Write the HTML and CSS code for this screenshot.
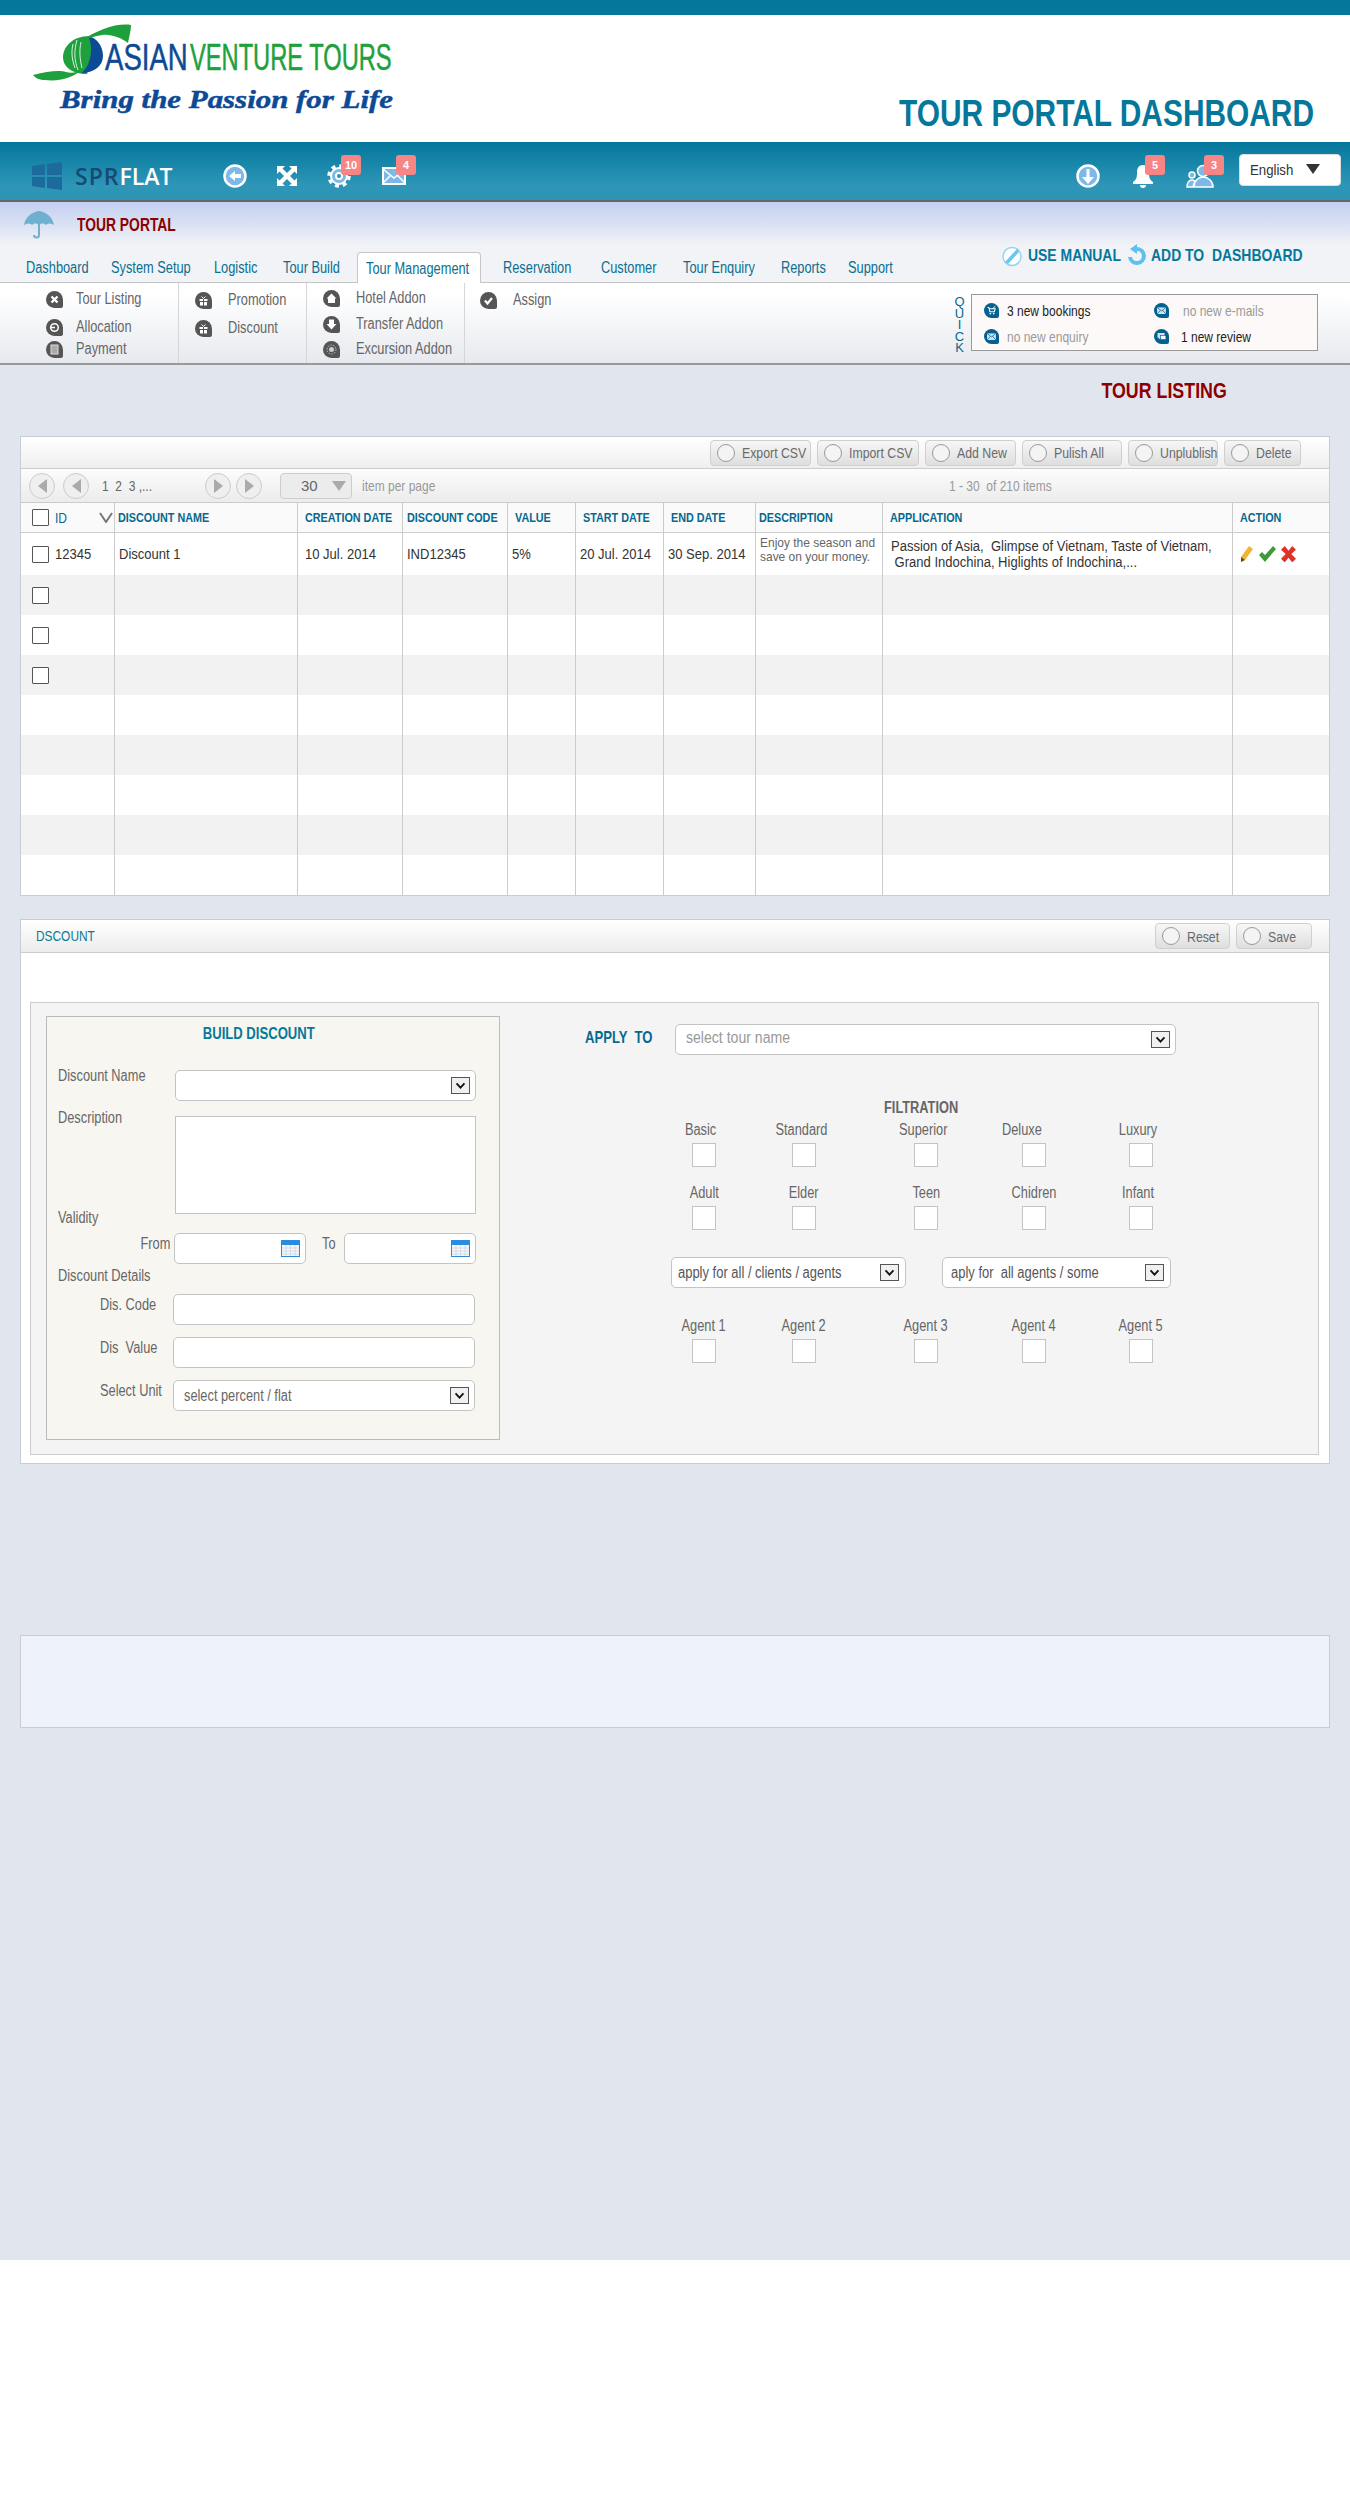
FILE: index.html
```html
<!DOCTYPE html>
<html lang="en">
<head>
    <title>Tour Portal Dashboard</title>
    <meta charset="utf-8">
    <link rel="stylesheet" href="styles.css">
</head>
<body>

<svg class="sprites" xmlns="http://www.w3.org/2000/svg">
    <symbol id="i-chev" viewBox="0 0 19 17"><path d="M5 6l4.500 5L14 6" fill="none" stroke="#111" stroke-width="2"/></symbol>
    <symbol id="i-cal" viewBox="0 0 19 17"><rect x=".5" y=".5" width="18" height="16" fill="#f4f6f8" stroke="#2b8be0"/><rect width="19" height="5" fill="#2b8be0"/><path d="M1 8h17M1 11h17M1 14h17M5 5v11M9.500 5v11M14 5v11" stroke="#cfd6dc" stroke-width=".8"/></symbol>
    <symbol id="i-x" viewBox="0 0 17 17"><path d="M5.500 5.500l6 6m0-6l-6 6" stroke="#fff" stroke-width="2.400"/></symbol>
    <symbol id="i-cycle" viewBox="0 0 17 17"><circle cx="8.500" cy="8.500" r="3.800" fill="none" stroke="#fff" stroke-width="1.500"/><path d="M4 8.500h5" stroke="#fff" stroke-width="1.500"/></symbol>
    <symbol id="i-doc" viewBox="0 0 17 17"><rect x="5" y="4" width="7" height="9" fill="#aaa" stroke="#ddd"/></symbol>
    <symbol id="i-gift" viewBox="0 0 17 17"><path d="M4.500 7h8v2h-8zM5 10h7v3.500H5z" fill="#fff"/><path d="M6.500 4.500l2 2 2-2" stroke="#fff" fill="none"/><path d="M8.500 7v7" stroke="#555"/></symbol>
    <symbol id="i-home" viewBox="0 0 17 17"><path d="M8.500 3.500l5 5h-1.500v4.500H5V8.500H3.500z" fill="#fff"/></symbol>
    <symbol id="i-down" viewBox="0 0 17 17"><path d="M6 3.500h5V8h2.500l-5 5.500-5-5.500H6z" fill="#fff"/></symbol>
    <symbol id="i-sun" viewBox="0 0 17 17"><circle cx="8.500" cy="8.500" r="2.500" fill="#ccc"/><circle cx="8.500" cy="8.500" r="4.500" fill="none" stroke="#ccc" stroke-dasharray="1.400 1.400"/></symbol>
    <symbol id="i-check" viewBox="0 0 17 17"><path d="M5 8.500l2.500 3L12 6" fill="none" stroke="#fff" stroke-width="2.200"/></symbol>
    <symbol id="i-cart" viewBox="0 0 17 17"><path d="M4 5h1.500l1.200 5h5l1-3.500H6" fill="none" stroke="#fff" stroke-width="1.200"/><path d="M9.500 6.500L13 3.500" stroke="#fff"/><circle cx="7.200" cy="12" r="1" fill="#fff"/><circle cx="11" cy="12" r="1" fill="#fff"/></symbol>
    <symbol id="i-mail" viewBox="0 0 17 17"><rect x="3.500" y="5" width="10" height="7.500" fill="#cfe3f2"/><path d="M3.500 5l5 4 5-4M3.500 12.500l4-4.500m6 4.500l-4-4.500" fill="none" stroke="#04608f" stroke-width=".8"/></symbol>
    <symbol id="i-chat" viewBox="0 0 17 17"><path d="M4 4.500h8v5.500H7.500L5.500 12v-2H4z" fill="#cfe3f2"/><rect x="7.500" y="7.500" width="6" height="4.500" fill="#fff" stroke="#04608f" stroke-width=".7"/></symbol>
    <symbol id="i-radio" viewBox="0 0 24 24"><circle cx="12" cy="12" r="10.500" fill="#7cb9e8" stroke="#fff" stroke-width="2.500"/></symbol>
</svg>

<div class="topbar"></div>

<header class="brand">
    <svg class="logo" viewBox="0 0 560 100" width="560" height="100" xmlns="http://www.w3.org/2000/svg">
        <path d="M60 16C41 16 33 28 33 37c0 10 9 17 24 17 4-12 6-26 3-38z" fill="#1ea03c"/>
        <path d="M58 16c9 2 15 10 15 20 0 10-9 17-22 17 8-4 14-24 7-37z" fill="#0d4a96"/>
        <path d="M47 20c-3 10-3 20 1 30M43 24c-2 8-1 16 2 24M51 22c-2 9-1 18 1 26" stroke="#d8efdc" fill="none"/>
        <path d="M101 5C87 3 68 9 50 22c8-4 15-6 22-7 10-1 19 3 26 8 1-6 3-12 3-18z" fill="#1ea03c"/>
        <path d="M3 55c15-4 27-5 33-3 6 2 12 0 17-3-7 7-22 13-38 11-5 0-10-2-12-5z" fill="#1ea03c"/>
        <text class="logo-word" transform="translate(75 50) scale(.745 1)" fill="#0d4a96" stroke="#0d4a96">ASIAN</text>
        <text class="logo-word" transform="translate(160 50) scale(.64 1)" fill="#1ea03c" stroke="#1ea03c">VENTURE TOURS</text>
        <text class="logo-tag" x="30" y="88" textLength="333" lengthAdjust="spacingAndGlyphs" fill="#0d4a96" stroke="#0d4a96" stroke-width=".5">Bring the Passion for Life</text>
    </svg>
    <h1 class="portal-title"><span class="n">TOUR PORTAL DASHBOARD</span></h1>
</header>

<nav class="navbar">
    <svg class="win" viewBox="0 0 30 28" width="30" height="28"><path d="M0 4l13-2v11H0zM15 2l15-2v13H15zM0 15h13v11L0 24zM15 15h15v13l-15-2z" fill="#1d6a9c"/></svg>
    <div class="brand-name"><span class="spr">SPR</span>FLAT</div>
    <div class="nav-icons">
        <span class="nav-icon">
            <svg viewBox="0 0 24 24" width="24" height="24"><use href="#i-radio"/><path d="M6 12l6-5v3h6v4h-6v3z" fill="#fff"/></svg>
        </span>
        <span class="nav-icon">
            <svg viewBox="0 0 24 24" width="24" height="24"><path d="M2 2h8L7.500 4.500 12 9l4.500-4.500L14 2h8v8l-2.500-2.500L15 12l4.500 4.500L22 14v8h-8l2.500-2.500L12 15l-4.500 4.500L10 22H2v-8l2.500 2.500L9 12 4.500 7.500 2 10z" fill="#fff"/></svg>
        </span>
        <span class="nav-icon">
            <svg viewBox="0 0 24 24" width="24" height="24"><circle cx="12" cy="12" r="10" fill="none" stroke="#fff" stroke-width="3.500" stroke-dasharray="3.900 3.950"/><circle cx="12" cy="12" r="8" fill="#7cb9e8" stroke="#fff" stroke-width="2"/><circle cx="12" cy="12" r="3" fill="#2e8fb3" stroke="#fff" stroke-width="2"/></svg>
            <span class="badge">10</span>
        </span>
        <span class="nav-icon nav-mail">
            <svg viewBox="0 0 24 18" width="24" height="18"><rect x="1" y="1" width="22" height="16" fill="#7cb9e8" stroke="#fff" stroke-width="2"/><path d="M1 2l11 9 11-9M1 16l8-8m14 8l-8-8" fill="none" stroke="#fff" stroke-width="1.500"/></svg>
            <span class="badge">4</span>
        </span>
    </div>
    <div class="nav-right">
        <span class="nav-icon">
            <svg viewBox="0 0 24 24" width="24" height="24"><use href="#i-radio"/><path d="M10.500 5h3v8H18l-6 7-6-7h4.500z" fill="#fff"/></svg>
        </span>
        <span class="nav-icon">
            <svg viewBox="0 0 24 24" width="24" height="24"><path d="M12 1c5 0 6 4 6 8 0 5 1 7 4 9v2H2v-2c3-2 4-4 4-9 0-4 1-8 6-8z" fill="#fff"/><path d="M9 21h6a3 3 0 0 1-6 0z" fill="#fff"/></svg>
            <span class="badge">5</span>
        </span>
        <span class="nav-icon nav-users">
            <svg viewBox="0 0 28 24" width="28" height="24"><circle cx="6" cy="11" r="3" fill="#7cb9e8" stroke="#fff" stroke-width="1.500"/><path d="M1 23c0-4 2-7 5-7 1 0 2 .5 3 1l-2 6z" fill="#7cb9e8" stroke="#fff" stroke-width="1.500"/><circle cx="17" cy="7" r="5.500" fill="#7cb9e8" stroke="#fff" stroke-width="1.500"/><path d="M8 23c0-6 4-10 9-10s10 4 10 10z" fill="#7cb9e8" stroke="#fff" stroke-width="1.500"/></svg>
            <span class="badge">3</span>
        </span>
        <div class="lang"><span class="n">English</span><i class="lang-arrow"></i></div>
    </div>
</nav>

<section class="portal">
    <div class="portal-head">
        <svg class="umbrella" viewBox="0 0 30 29" width="30" height="29"><path d="M15 1C7 2 1 8 0 15c3-2 6-2 8 0 2-2 5-2 7 0 2-2 5-2 7 0 2-2 5-2 8 0-1-7-7-13-15-14z" fill="#6fb0d0"/><path d="M15 14v11a2.500 2.500 0 0 1-5 0" fill="none" stroke="#6fb0d0" stroke-width="2"/></svg>
        <div class="portal-name"><span class="n">TOUR PORTAL</span></div>
    </div>
    <div class="portal-bar">
        <ul class="tabs">
            <li><span class="n">Dashboard</span></li>
            <li><span class="n">System Setup</span></li>
            <li><span class="n">Logistic</span></li>
            <li><span class="n">Tour Build</span></li>
            <li class="active"><span class="n">Tour Management</span></li>
            <li><span class="n">Reservation</span></li>
            <li><span class="n">Customer</span></li>
            <li><span class="n">Tour Enquiry</span></li>
            <li><span class="n">Reports</span></li>
            <li><span class="n">Support</span></li>
        </ul>
        <div class="links">
            <svg viewBox="0 0 20 21" width="20" height="21"><circle cx="10" cy="10.500" r="9" fill="#fff" stroke="#8fd6f5" stroke-width="1.500"/><path d="M3 16L15 3l2 3L6 18z" fill="#6cc5ee"/></svg>
            <a class="link-manual"><span class="n">USE MANUAL</span></a>
            <svg viewBox="0 0 20 24" width="20" height="24"><path d="M10 3a9 9 0 1 1-9 10h4a5 5 0 1 0 5-6v3L3 5l7-5z" fill="#5fc0ee"/></svg>
            <a class="link-add"><span class="n">ADD TO &nbsp;DASHBOARD</span></a>
        </div>
    </div>
</section>

<section class="submenu">
    <div class="menu-col col-first">
        <div class="menu-item"><span class="bub"><svg><use href="#i-x"/></svg></span><span class="n">Tour Listing</span></div>
        <div class="menu-item"><span class="bub"><svg><use href="#i-cycle"/></svg></span><span class="n">Allocation</span></div>
        <div class="menu-item"><span class="bub"><svg><use href="#i-doc"/></svg></span><span class="n">Payment</span></div>
    </div>
    <div class="menu-col col-second">
        <div class="menu-item"><span class="bub"><svg><use href="#i-gift"/></svg></span><span class="n">Promotion</span></div>
        <div class="menu-item"><span class="bub"><svg><use href="#i-gift"/></svg></span><span class="n">Discount</span></div>
    </div>
    <div class="menu-col col-third">
        <div class="menu-item"><span class="bub"><svg><use href="#i-home"/></svg></span><span class="n">Hotel Addon</span></div>
        <div class="menu-item"><span class="bub"><svg><use href="#i-down"/></svg></span><span class="n">Transfer Addon</span></div>
        <div class="menu-item"><span class="bub"><svg><use href="#i-sun"/></svg></span><span class="n">Excursion Addon</span></div>
    </div>
    <div class="menu-col col-last">
        <div class="menu-item"><span class="bub"><svg><use href="#i-check"/></svg></span><span class="n">Assign</span></div>
    </div>
    <div class="quick">
        <div class="quick-label">QUICK</div>
        <div class="quick-box">
            <div class="quick-item"><span class="bub blue"><svg><use href="#i-cart"/></svg></span><span class="n">3 new bookings</span></div>
            <div class="quick-item off"><span class="bub blue"><svg><use href="#i-mail"/></svg></span><span class="n">no new e-mails</span></div>
            <div class="quick-item off"><span class="bub blue"><svg><use href="#i-mail"/></svg></span><span class="n">no new enquiry</span></div>
            <div class="quick-item"><span class="bub blue"><svg><use href="#i-chat"/></svg></span><span class="n">1 new review</span></div>
        </div>
    </div>
</section>

<main class="content">
    <h2 class="page-title"><span class="n">TOUR LISTING</span></h2>

    <section class="panel">
        <div class="toolbar">
            <a class="btn"><i></i><span class="n">Export CSV</span></a>
            <a class="btn"><i></i><span class="n">Import CSV</span></a>
            <a class="btn"><i></i><span class="n">Add New</span></a>
            <a class="btn"><i></i><span class="n">Pulish All</span></a>
            <a class="btn"><i></i><span class="n">Unplublish</span></a>
            <a class="btn"><i></i><span class="n">Delete</span></a>
        </div>
        <div class="pager">
            <a class="pg-btn"><i class="tri-l"></i></a>
            <a class="pg-btn"><i class="tri-l"></i></a>
            <span class="pg-nums"><span class="n">1&nbsp; 2&nbsp; 3 ,...</span></span>
            <a class="pg-btn"><i class="tri-r"></i></a>
            <a class="pg-btn"><i class="tri-r"></i></a>
            <span class="pg-size">30<i class="tri-d"></i></span>
            <span class="pg-text"><span class="n">item per page</span></span>
            <span class="pg-count"><span class="n">1 - 30 &nbsp;of 210 items</span></span>
        </div>
        <table class="grid">
            <colgroup>
                <col class="c-id"><col class="c-name"><col class="c-date"><col class="c-date"><col class="c-val">
                <col class="c-start"><col class="c-end"><col class="c-desc"><col class="c-app"><col class="c-act">
            </colgroup>
            <thead>
                <tr>
                    <th class="th-id"><div class="cell"><span class="check"></span><span class="id-text">ID</span><svg class="id-sort" viewBox="0 0 14 11" width="14" height="11"><path d="M1 1l6 9 6-9" fill="none" stroke="#777" stroke-width="2"/></svg></div></th>
                    <th class="th-name"><span class="n">DISCOUNT NAME</span></th>
                    <th><span class="n">CREATION DATE</span></th>
                    <th class="th-code"><span class="n">DISCOUNT CODE</span></th>
                    <th><span class="n">VALUE</span></th>
                    <th><span class="n">START DATE</span></th>
                    <th><span class="n">END DATE</span></th>
                    <th class="th-desc"><span class="n">DESCRIPTION</span></th>
                    <th><span class="n">APPLICATION</span></th>
                    <th><span class="n">ACTION</span></th>
                </tr>
            </thead>
            <tbody>
                <tr class="first">
                    <td><div class="cell"><span class="check"></span><span class="n">12345</span></div></td>
                    <td class="td-name"><span class="n">Discount 1</span></td>
                    <td><span class="n">10 Jul. 2014</span></td>
                    <td class="td-code"><span class="n">IND12345</span></td>
                    <td class="td-val"><span class="n">5%</span></td>
                    <td class="td-start"><span class="n">20 Jul. 2014</span></td>
                    <td class="td-end"><span class="n">30 Sep. 2014</span></td>
                    <td class="td-desc"><span class="n">Enjoy the season and</span><br><span class="n">save on your money.</span></td>
                    <td class="td-app"><span class="n">Passion of Asia, &nbsp;Glimpse of Vietnam, Taste of Vietnam,</span><br><span class="n">&nbsp;Grand Indochina, Higlights of Indochina,...</span></td>
                    <td class="td-act">
                        <svg viewBox="0 0 14 18" width="14" height="18"><path d="M9 1l4 3-8 11-4 2 0-5z" fill="#f2b632"/><path d="M1 12l4 3-4 2z" fill="#6b4a18"/></svg>
                        <svg viewBox="0 0 17 16" width="17" height="16"><path d="M0 9l3-3 3 3 8-9 3 3L6 16z" fill="#3f9a3a"/></svg>
                        <svg viewBox="0 0 16 17" width="15" height="16"><path d="M0 4l4-4 4 5 4-5 4 4-5 4.500 5 5-4 4-4-5-4 5-4-4 5-5z" fill="#e0312a"/></svg>
                    </td>
                </tr>
                <tr><td><div class="cell"><span class="check"></span></div></td><td></td><td></td><td></td><td></td><td></td><td></td><td></td><td></td><td></td></tr>
                <tr><td><div class="cell"><span class="check"></span></div></td><td></td><td></td><td></td><td></td><td></td><td></td><td></td><td></td><td></td></tr>
                <tr><td><div class="cell"><span class="check"></span></div></td><td></td><td></td><td></td><td></td><td></td><td></td><td></td><td></td><td></td></tr>
                <tr><td></td><td></td><td></td><td></td><td></td><td></td><td></td><td></td><td></td><td></td></tr>
                <tr><td></td><td></td><td></td><td></td><td></td><td></td><td></td><td></td><td></td><td></td></tr>
                <tr><td></td><td></td><td></td><td></td><td></td><td></td><td></td><td></td><td></td><td></td></tr>
                <tr><td></td><td></td><td></td><td></td><td></td><td></td><td></td><td></td><td></td><td></td></tr>
                <tr><td></td><td></td><td></td><td></td><td></td><td></td><td></td><td></td><td></td><td></td></tr>
            </tbody>
        </table>
    </section>

    <section class="panel panel-form">
        <div class="panel-head">
            <span class="panel-name"><span class="n">DSCOUNT</span></span>
            <a class="btn btn-reset"><i></i><span class="n">Reset</span></a>
            <a class="btn btn-save"><i></i><span class="n">Save</span></a>
        </div>
        <div class="form-area">
            <div class="build">
                <h3 class="build-title"><span class="n">BUILD DISCOUNT</span></h3>
                <div class="row row-name">
                    <label><span class="n">Discount Name</span></label>
                    <div class="ctl ctl-wide"><span class="arrow"><svg><use href="#i-chev"/></svg></span></div>
                </div>
                <div class="row row-desc">
                    <label><span class="n">Description</span></label>
                    <div class="ctl ctl-wide ctl-area"></div>
                </div>
                <div class="caption cap-validity"><span class="n">Validity</span></div>
                <div class="row row-dates">
                    <label class="lbl-from"><span class="n">From</span></label>
                    <div class="ctl ctl-date"><svg class="cal"><use href="#i-cal"/></svg></div>
                    <label class="lbl-to"><span class="n">To</span></label>
                    <div class="ctl ctl-date"><svg class="cal"><use href="#i-cal"/></svg></div>
                </div>
                <div class="caption cap-details"><span class="n">Discount Details</span></div>
                <div class="row row-sub">
                    <label><span class="n">Dis. Code</span></label>
                    <div class="ctl ctl-sub"></div>
                </div>
                <div class="row row-sub">
                    <label><span class="n">Dis &nbsp;Value</span></label>
                    <div class="ctl ctl-sub"></div>
                </div>
                <div class="row row-sub">
                    <label><span class="n">Select Unit</span></label>
                    <div class="ctl ctl-sub"><span class="ctl-text"><span class="n">select percent / flat</span></span><span class="arrow"><svg><use href="#i-chev"/></svg></span></div>
                </div>
            </div>

            <div class="apply">
                <div class="apply-row">
                    <div class="apply-name"><span class="n">APPLY &nbsp;TO</span></div>
                    <div class="ctl ctl-tour"><span class="ctl-text muted"><span class="n">select tour name</span></span><span class="arrow"><svg><use href="#i-chev"/></svg></span></div>
                </div>
                <div class="filter-name"><span class="n">FILTRATION</span></div>
                <div class="opts">
                    <div class="opt opt-up"><span class="n">Basic</span><i></i></div>
                    <div class="opt opt-up"><span class="n">Standard</span><i></i></div>
                    <div class="opt opt-up"><span class="n">Superior</span><i></i></div>
                    <div class="opt opt-left"><span class="n">Deluxe</span><i></i></div>
                    <div class="opt opt-up"><span class="n">Luxury</span><i></i></div>
                    <div class="opt"><span class="n">Adult</span><i></i></div>
                    <div class="opt"><span class="n">Elder</span><i></i></div>
                    <div class="opt"><span class="n">Teen</span><i></i></div>
                    <div class="opt"><span class="n">Chidren</span><i></i></div>
                    <div class="opt opt-up"><span class="n">Infant</span><i></i></div>
                </div>
                <div class="apply-selects">
                    <div class="ctl ctl-clients"><span class="ctl-text"><span class="n">apply for all / clients / agents</span></span><span class="arrow"><svg><use href="#i-chev"/></svg></span></div>
                    <div class="ctl ctl-agents"><span class="ctl-text"><span class="n">aply for &nbsp;all agents / some</span></span><span class="arrow"><svg><use href="#i-chev"/></svg></span></div>
                </div>
                <div class="opts">
                    <div class="opt"><span class="n">Agent 1</span><i></i></div>
                    <div class="opt"><span class="n">Agent 2</span><i></i></div>
                    <div class="opt"><span class="n">Agent 3</span><i></i></div>
                    <div class="opt"><span class="n">Agent 4</span><i></i></div>
                    <div class="opt"><span class="n">Agent 5</span><i></i></div>
                </div>
            </div>
        </div>
    </section>

    <section class="lower-box"></section>
</main>

</body>
</html>
```

FILE: styles.css
```css
html, body {
    margin: 0;
    padding: 0;
    background: #fff;
}
body {
    font-family: "Liberation Sans", Arial, sans-serif;
    font-size: 16px;
    color: #666;
    height: 2500px;
    overflow: hidden;
}
h1, h2, h3, ul {
    margin: 0;
    padding: 0;
}
a {
    cursor: pointer;
}
.sprites {
    display: none;
}
/* the whole design is squeezed sideways, no narrow font is installed */
.n {
    display: inline-block;
    white-space: nowrap;
    transform: scaleX(var(--sx, .8));
    transform-origin: left center;
}

/* header */
.topbar {
    height: 15px;
    background: #04779b;
}
.brand {
    height: 127px;
    display: flex;
    justify-content: space-between;
}
.logo {
    margin: 5px 0 0 30px;
    flex: none;
}
.logo-word {
    font-size: 37px;
    stroke-width: .5;
}
.logo-tag {
    font-family: "Liberation Serif", serif;
    font-weight: bold;
    font-style: italic;
    font-size: 26px;
}
.portal-title {
    margin: 79px 36px 0 0;
    font-size: 36px;
    line-height: 40px;
    font-weight: bold;
    color: #04779b;
    --sx: .83;
}
.portal-title .n {
    transform-origin: right center;
}

/* dark nav */
.navbar {
    display: flex;
    align-items: center;
    padding-top: 10px;
    height: 48px;
    background: linear-gradient(#04779b, #2e96b8 75%, #2e93b5);
    border-bottom: 2px solid #666;
}
.win {
    margin-left: 32px;
    flex: none;
}
.brand-name {
    margin-left: 13px;
    width: 95px;
    font-family: "Open Sans", sans-serif;
    font-weight: 600;
    font-size: 23px;
    color: #fff;
}
.spr {
    color: #154a74;
    letter-spacing: 1px;
}
.nav-icons {
    margin-left: 53px;
    display: flex;
    gap: 28px;
}
.nav-icon {
    position: relative;
    display: flex;
    align-items: center;
    width: 24px;
    height: 24px;
}
.nav-mail {
    margin-left: 3px;
}
.nav-users {
    width: 28px;
}
.badge {
    position: absolute;
    top: -9px;
    right: -10px;
    width: 20px;
    height: 20px;
    border-radius: 3px;
    background: #f78585;
    color: #fff;
    font: bold 11px/20px "Liberation Sans", sans-serif;
    text-align: center;
}
.nav-right {
    margin-left: auto;
    display: flex;
    align-items: center;
    gap: 31px;
    margin-right: 9px;
}
.lang {
    width: 102px;
    height: 32px;
    box-sizing: border-box;
    margin: -12px 0 0 -6px;
    padding: 0 0 2px 10px;
    display: flex;
    align-items: center;
    background: #fff;
    border: 1px solid #ddd;
    border-radius: 4px;
    color: #333;
    font-size: 15px;
    --sx: .88;
}
.lang-arrow {
    margin-left: 7px;
    border-style: solid;
    border-width: 10px 7.500px 0;
    border-color: #333 transparent transparent;
}

/* portal strip */
.portal {
    height: 81px;
    box-sizing: border-box;
    display: flex;
    flex-direction: column;
    justify-content: space-between;
    background: linear-gradient(#c2cff0, #f1f3f6 55%);
    border-bottom: 1px solid #c6c6c6;
}
.portal-head {
    display: flex;
    padding: 8px 0 0 24px;
}
.portal-name {
    margin: 5px 0 0 23px;
    font-size: 18px;
    line-height: 20px;
    font-weight: bold;
    color: #8e0000;
    --sx: .77;
}
.portal-bar {
    position: relative;
    top: 1px;
    display: flex;
    align-items: flex-end;
    justify-content: space-between;
}
.tabs {
    list-style: none;
    display: grid;
    grid-template-columns: 85px 103px 69px 74px 146px 98px 82px 98px 67px 60px;
    padding-left: 26px;
    color: #0a6f8f;
}
.tabs li {
    height: 31px;
    line-height: 32px;
    white-space: nowrap;
}
.tabs .active {
    box-sizing: border-box;
    width: 124px;
    padding-left: 8px;
    background: #fff;
    border: 1px solid #c6c6c6;
    border-bottom: 0;
    border-radius: 4px 4px 0 0;
}
.links {
    display: flex;
    align-items: center;
    margin: 0 47px 15px 0;
    font-size: 17px;
    font-weight: bold;
    color: #04779b;
    --sx: .82;
}
.link-manual {
    width: 92px;
    margin: 0 7px 0 6px;
}
.link-add {
    width: 152px;
    margin-left: 4px;
}

/* sub menu */
.submenu {
    height: 82px;
    box-sizing: border-box;
    display: flex;
    background: linear-gradient(#fff 15%, #e6e9ee);
    border-bottom: 2px solid #999;
}
.menu-col {
    box-sizing: border-box;
    display: grid;
    padding-top: 2px;
    border-right: 1px solid #d4d6da;
}
.col-first {
    width: 179px;
    padding-left: 46px;
    grid-template-rows: 28px 28px 16px;
}
.col-second {
    width: 128px;
    padding-left: 16px;
    grid-template-rows: 30px 26px;
    align-content: start;
}
.col-third {
    width: 158px;
    padding-left: 16px;
    grid-template-rows: 26px 26px 24px;
}
.col-last {
    width: 200px;
    padding-left: 15px;
    grid-template-rows: 30px;
    border-right: 0;
}
.menu-item {
    display: flex;
    align-items: center;
    gap: 16px;
    white-space: nowrap;
}
.col-first .menu-item {
    gap: 13px;
}
.bub {
    flex: none;
    width: 17px;
    height: 17px;
    border-radius: 50% 50% 2px 50%;
    background: #555;
}
.bub svg {
    display: block;
    width: 17px;
    height: 17px;
}
.bub.blue {
    background: #04608f;
}
.quick {
    margin: 11px 32px 0 auto;
    display: flex;
    gap: 5px;
}
.quick-label {
    writing-mode: vertical-rl;
    text-orientation: upright;
    width: 14px;
    height: 58px;
    font-size: 13px;
    line-height: 14px;
    letter-spacing: -3.500px;
    color: #05698f;
}
.quick-box {
    box-sizing: border-box;
    width: 347px;
    height: 57px;
    padding: 2px 0 0 12px;
    display: grid;
    grid-template-columns: 170px 160px;
    grid-auto-rows: 26px;
    background: #fdf9f8;
    border: 1px solid #999;
}
.quick-item {
    display: flex;
    align-items: center;
    gap: 8px;
    font-size: 15px;
    color: #222;
}
.quick-item .bub,
.quick-item .bub svg {
    width: 15px;
    height: 15px;
}
.quick-item.off {
    color: #999;
}
.quick-item.off:nth-child(2) {
    gap: 14px;
}
.quick-item:nth-child(4) {
    gap: 12px;
}

/* page */
.content {
    height: 1895px;
    padding-left: 20px;
    background: #e1e6ee;
}
.page-title {
    height: 71px;
    box-sizing: border-box;
    padding: 14px 123px 0 0;
    text-align: right;
    font-size: 22px;
    line-height: 24px;
    font-weight: bold;
    color: #8e0000;
    --sx: .81;
}
.page-title .n {
    transform-origin: right center;
}
.panel {
    width: 1310px;
    box-sizing: border-box;
    background: #fff;
    border: 1px solid #c8cdd3;
}
.toolbar {
    height: 31px;
    padding-right: 28px;
    display: grid;
    grid-template-columns: 101px 102px 91px 100px 90px 77px;
    column-gap: 6px;
    justify-content: end;
    align-items: center;
    background: linear-gradient(#fff, #efefef);
    border-bottom: 1px solid #ccc;
}
.btn {
    box-sizing: border-box;
    height: 26px;
    padding-left: 6px;
    display: flex;
    align-items: center;
    font-size: 15px;
    color: #6a6a6a;
    background: linear-gradient(#f7f7f7, #dedede);
    border: 1px solid #cfcfcf;
    border-radius: 4px;
    --sx: .82;
}
.btn i {
    flex: none;
    width: 18px;
    height: 18px;
    margin-right: 7px;
    box-sizing: border-box;
    border: 1px solid #999;
    border-radius: 50%;
    background: #f4f4f4;
}
.pager {
    height: 33px;
    padding-left: 8px;
    display: flex;
    align-items: center;
    font-size: 15px;
    color: #999;
    background: linear-gradient(#fcfcfc, #ececec);
    border-bottom: 1px solid #ccc;
}
.pg-btn {
    box-sizing: border-box;
    flex: none;
    width: 26px;
    height: 26px;
    margin-right: 8px;
    display: flex;
    align-items: center;
    justify-content: center;
    border: 1px solid #ccc;
    border-radius: 50%;
    background: #efefef;
}
.tri-l, .tri-r, .tri-d {
    border-style: solid;
    border-color: transparent;
}
.tri-l {
    border-width: 7px 9px 7px 0;
    border-right-color: #aaa;
}
.tri-r {
    border-width: 7px 0 7px 9px;
    border-left-color: #aaa;
}
.tri-d {
    margin-left: 14px;
    border-width: 10px 7px 0;
    border-top-color: #aaa;
}
.pg-nums {
    width: 103px;
    margin-left: 5px;
    color: #666;
}
.pg-nums + .pg-btn {
    margin-right: 5px;
}
.pg-size {
    box-sizing: border-box;
    width: 72px;
    height: 26px;
    margin-left: 10px;
    padding-left: 20px;
    display: flex;
    align-items: center;
    color: #666;
    background: #ececec;
    border: 1px solid #ccc;
    border-radius: 4px;
}
.pg-text {
    width: 587px;
    margin-left: 10px;
}

/* grid */
.grid {
    width: 1308px;
    table-layout: fixed;
    border-collapse: separate;
    border-spacing: 0;
    font-size: 14px;
    color: #333;
    --sx: .93;
}
.c-id { width: 94px; }
.c-name { width: 183px; }
.c-date { width: 105px; }
.c-val { width: 68px; }
.c-start { width: 88px; }
.c-end { width: 92px; }
.c-desc { width: 127px; }
.c-app { width: 350px; }
.c-act { width: 96px; }
.grid th {
    height: 30px;
    box-sizing: border-box;
    padding: 0 0 0 7px;
    text-align: left;
    font-size: 12px;
    font-weight: bold;
    color: #05698f;
    background: #fafafa;
    border-right: 1px solid #ccc;
    border-bottom: 1px solid #ccc;
    --sx: .9;
}
.grid .th-name { padding-left: 3px; }
.grid .th-code { padding-left: 4px; }
.grid .th-desc { padding-left: 3px; }
.grid .th-id {
    padding-left: 11px;
    font-weight: normal;
    font-size: 15px;
}
.id-text {
    transform: scaleX(.8);
    transform-origin: left center;
}
.id-sort {
    margin-left: 29px;
}
.cell {
    display: flex;
    align-items: center;
}
.grid td {
    height: 40px;
    box-sizing: border-box;
    padding: 0 0 0 7px;
    border-right: 1px solid #ccc;
}
.grid td:last-child,
.grid th:last-child {
    border-right: 0;
}
.grid .first td {
    height: 42px;
}
.grid tbody tr:nth-child(even) td {
    background: #f2f2f2;
}
.grid td:first-child {
    padding-left: 11px;
}
.grid .td-name,
.grid .td-code,
.grid .td-val,
.grid .td-start,
.grid .td-end { padding-left: 4px; }
.grid .td-desc {
    padding: 3px 0 0 4px;
    vertical-align: top;
    font-size: 13px;
    line-height: 14px;
    color: #666;
    --sx: .92;
}
.grid .td-app {
    padding-left: 8px;
    line-height: 16px;
}
.td-act svg {
    margin-right: 1px;
    vertical-align: middle;
}
.check {
    flex: none;
    box-sizing: border-box;
    width: 17px;
    height: 17px;
    margin-right: 6px;
    background: #fff;
    border: 1px solid #555;
    border-radius: 1px;
}

/* discount form */
.panel-form {
    margin-top: 23px;
}
.panel-head {
    height: 32px;
    padding-right: 17px;
    display: flex;
    align-items: center;
    gap: 6px;
    background: linear-gradient(#fff, #ececec);
    border-bottom: 1px solid #ccc;
}
.panel-name {
    margin: 0 auto 0 15px;
    font-size: 14px;
    color: #0a7a95;
    --sx: .85;
}
.btn-reset { width: 75px; }
.btn-save { width: 76px; }
.form-area {
    box-sizing: border-box;
    margin: 49px 10px 8px 9px;
    height: 453px;
    padding: 13px 0 0 15px;
    display: flex;
    background: #f4f4f4;
    border: 1px solid #ccc;
}
.build {
    box-sizing: border-box;
    width: 454px;
    height: 424px;
    padding: 7px 0 0 11px;
    flex: none;
    background: #f7f6f1;
    border: 1px solid #bbb;
}
.build-title {
    padding-right: 40px;
    text-align: center;
    font-size: 17px;
    line-height: 20px;
    color: #05799a;
    --sx: .77;
}
.build-title .n {
    transform-origin: center;
}
.row {
    display: flex;
    align-items: flex-start;
}
.row label {
    line-height: 18px;
}
.row-name {
    margin-top: 26px;
}
.row-name label,
.row-desc label {
    width: 117px;
    margin-top: -3px;
}
.row-desc {
    margin-top: 15px;
}
.row-desc label {
    margin-top: -7px;
}
.caption {
    line-height: 18px;
}
.cap-validity {
    margin-top: -5px;
}
.row-dates {
    margin-top: 6px;
}
.lbl-from {
    width: 116px;
    margin-top: 2px;
    padding-right: 4px;
    box-sizing: border-box;
    text-align: right;
}
.lbl-from .n {
    transform-origin: right center;
}
.lbl-to {
    width: 38px;
    margin-top: 2px;
    padding-left: 16px;
    box-sizing: border-box;
}
.cap-details {
    margin-top: 3px;
}
.row-sub {
    margin-top: 12px;
    padding-left: 42px;
}
.cap-details + .row-sub {
    margin-top: 9px;
}
.row-sub label {
    width: 73px;
    margin-top: 2px;
    white-space: nowrap;
}
.ctl {
    box-sizing: border-box;
    height: 31px;
    padding: 0 5px 0 10px;
    display: flex;
    align-items: center;
    justify-content: space-between;
    background: #fff;
    border: 1px solid #c4c4c4;
    border-radius: 5px;
}
.ctl-wide {
    width: 301px;
    justify-content: flex-end;
}
.ctl-area {
    height: 98px;
    border-radius: 0;
}
.ctl-date {
    width: 132px;
    justify-content: flex-end;
}
.cal {
    width: 19px;
    height: 17px;
}
.ctl-sub {
    width: 302px;
}
.ctl-text {
    white-space: nowrap;
    color: #666;
}
.ctl-text.muted {
    margin-top: -3px;
    color: #999;
    --sx: .88;
}
.arrow {
    flex: none;
    box-sizing: border-box;
    width: 19px;
    height: 17px;
    background: #f0f0f0;
    border: 1px solid #555;
}
.arrow svg {
    display: block;
    width: 17px;
    height: 15px;
}
.apply {
    margin-left: 85px;
    padding-top: 8px;
}
.apply-row {
    display: flex;
    align-items: center;
}
.apply-name {
    width: 90px;
    margin-top: -4px;
    font-size: 17px;
    font-weight: bold;
    color: #05698f;
    --sx: .77;
}
.ctl-tour {
    width: 501px;
}
.filter-name {
    margin: 44px 0 0 299px;
    font-size: 16px;
    line-height: 18px;
    font-weight: bold;
}
.opts {
    margin: 4px 0 0 69px;
    display: grid;
    grid-template-columns: 100px 100px 144px 72px 142px;
    row-gap: 17px;
    width: 558px;
}
.opt {
    display: flex;
    flex-direction: column;
    align-items: center;
}
.opt .n {
    line-height: 18px;
    transform-origin: center;
}
.opt i {
    width: 24px;
    height: 24px;
    box-sizing: border-box;
    margin-top: 4px;
    background: #fff;
    border: 1px solid #c4c4c4;
}
.opt-up .n {
    margin-right: 6px;
}
.opt-left .n {
    margin-right: 24px;
}
.apply-selects {
    margin: 27px 0 29px 86px;
    display: flex;
    gap: 36px;
}
.apply-selects .ctl {
    padding-left: 6px;
}
.apply-selects .ctl-text {
    color: #555;
    --sx: .81;
}
.ctl-clients {
    width: 235px;
    padding-right: 9px;
}
.ctl-agents {
    width: 229px;
    padding-right: 6px;
    --sx: .82;
}
.ctl-agents .ctl-text {
    padding-left: 2px;
}
.apply-selects + .opts {
    margin-top: 0;
}
.lower-box {
    width: 1310px;
    height: 93px;
    box-sizing: border-box;
    margin-top: 171px;
    background: #eef3fb;
    border: 1px solid #ccc;
}
```
